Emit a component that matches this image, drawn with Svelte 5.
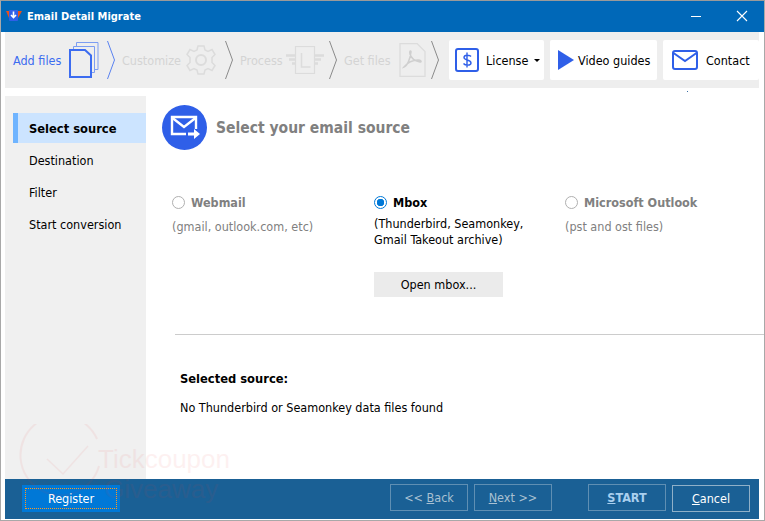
<script>
  // wizard steps along the top bar, width holds the label and the gap up to its icon
  const steps = [
    { label: 'Add files', icon: 'files', active: true, width: 56, after: 8 },
    { label: 'Customize', icon: 'gear', width: 64, after: 9 },
    { label: 'Process', icon: 'process', width: 45, after: 4 },
    { label: 'Get files', icon: 'pdf', width: 55, after: 5 }
  ];
  const menu = ['Select source', 'Destination', 'Filter', 'Start conversion'];
</script>

<div class="window">
  <header class="titlebar">
    <svg class="logo" width="17" height="14" viewBox="0 0 17 14">
      <path d="M0 2h3v7z" fill="#e8501c" />
      <path d="M16 2h-4v7z" fill="#e8501c" />
      <rect x="3" y="1" width="9" height="11" rx="1" fill="#2f5fe8" />
      <path d="M7.500 2.500v6M5 6l2.500 2.500L10 6" stroke="#fff" stroke-width="1.600" fill="none" />
    </svg>
    <span class="title">Email Detail Migrate</span>
    <div class="winbtns">
      <svg width="12" height="12" viewBox="0 0 12 12"><path d="M1 6.500h10" stroke="#fff" /></svg>
      <svg width="12" height="12" viewBox="0 0 12 12"><path d="M1 1l10 10M11 1L1 11" stroke="#fff" stroke-width="1.100" /></svg>
    </div>
  </header>

  <div class="toolbar">
    {#each steps as step}
      <span class="step" class:active={step.active} style="width: {step.width}px">{step.label}</span>
      {#if step.icon === 'files'}
        <svg width="30" height="36" viewBox="0 0 30 36" fill="none" stroke="#3c6cf0">
          <path d="M7.500 4V.500h21.500v27h-4" stroke="#7c9df2" />
          <path d="M4.500 7V4.500h21v26h-3" stroke="#7c9df2" />
          <path d="M1 8h15l6 5.500V35H1z" stroke-width="2" fill="#eee" />
        </svg>
      {:else if step.icon === 'gear'}
        <svg width="30" height="30" viewBox="0 0 30 30" fill="none" stroke="#dcdcdc" stroke-width="1.500">
          <path d="M12 1h6l1 4 3 1.500 4-2 3 5-3 3v5l3 3-3 5-4-2-3 1.500-1 4h-6l-1-4-3-1.500-4 2-3-5 3-3v-5l-3-3 3-5 4 2 3-1.500z" />
          <circle cx="15" cy="15" r="5" stroke-width="2" />
        </svg>
      {:else if step.icon === 'process'}
        <svg width="40" height="28" viewBox="0 0 40 28" fill="none" stroke="#dcdcdc">
          <rect x="10.500" y="0.500" width="19" height="27" stroke-width="1.200" />
          <path d="M16.500 7v14h9" stroke-width="1.600" />
          <path d="M1 9.500h9M4 13.500h6M7 17.500h3M30 9.500h9M30 13.500h6M30 17.500h3" stroke-width="2.400" />
        </svg>
      {:else}
        <svg width="27" height="34" viewBox="0 0 27 34" fill="none" stroke="#dcdcdc" stroke-width="1.300">
          <path d="M1 .500h17l8 8v25H1z" />
          <path d="M5 24c3-1 6-7 7-15 0-2-2-1-1 2 1 4 5 7 10 8 2 0 1-2-2-2-5 0-10 2-14 7z" stroke="#cfcfcf" stroke-width="1.500" />
        </svg>
      {/if}
      <svg class="chevron" style="margin-left: {step.after}px" width="8" height="38" viewBox="0 0 8 38" fill="none" stroke={step.active ? '#5a82f0' : '#8a8a8a'}>
        <path d="M0.500 0l7 19-7 19" />
      </svg>
    {/each}

    <button class="toolbtn license">
      <svg width="24" height="24" viewBox="0 0 24 24" fill="none" stroke="#2f5fe8">
        <rect x="1" y="1" width="22" height="22" rx="2" stroke-width="2" />
        <path d="M16 8.500c-1-1.500-7-2-7 1 0 3 7 2 7 5.500 0 3-6 2.500-7.500 .5M12 4.500v15" stroke-width="1.400" />
      </svg>
      <span class="btnlabel">License</span>
      <i class="caret"></i>
    </button>
    <button class="toolbtn video">
      <svg width="16" height="20" viewBox="0 0 16 20"><path d="M0 0l16 10L0 20z" fill="#2f5fe8" /></svg>
      <span>Video guides</span>
    </button>
    <button class="toolbtn contact">
      <svg width="26" height="20" viewBox="0 0 26 20" fill="none" stroke="#2f5fe8" stroke-width="2">
        <rect x="1" y="1" width="24" height="18" rx="2" />
        <path d="M1.500 3l11.500 8 11.500-8" />
      </svg>
      <span>Contact</span>
    </button>
  </div>

  <div class="middle">
    <nav class="sidebar">
      {#each menu as item, i}
        <div class="navitem" class:selected={i === 0}>{item}</div>
      {/each}
    </nav>

    <main class="content">
      <div class="heading">
        <svg width="45" height="45" viewBox="0 0 45 45">
          <circle cx="22.500" cy="22.500" r="22.500" fill="#2f5fe8" />
          <path d="M24 29H10V12h24v12" fill="none" stroke="#fff" stroke-width="2.400" />
          <path d="M10.500 13l11.500 9 11.500-9" fill="none" stroke="#fff" stroke-width="2.400" />
          <path d="M26 27.500h6V24l6 5-6 5v-3.500h-6z" fill="#fff" />
        </svg>
        <h1>Select your email source</h1>
      </div>

      <div class="sources">
        <div class="source webmail disabled">
          <label><i class="radio"></i>Webmail</label>
          <p>(gmail, outlook.com, etc)</p>
        </div>
        <div class="source mbox">
          <label><i class="radio on"></i>Mbox</label>
          <p>(Thunderbird, Seamonkey,<br />Gmail Takeout archive)</p>
          <button class="open">Open mbox...</button>
        </div>
        <div class="source outlook disabled">
          <label><i class="radio"></i>Microsoft Outlook</label>
          <p>(pst and ost files)</p>
        </div>
      </div>

      <hr />

      <div class="selected-source">
        <h2>Selected source:</h2>
        <p>No Thunderbird or Seamonkey data files found</p>
      </div>
    </main>
  </div>

  <footer class="bottom">
    <button class="register"><span>Register</span></button>
    <button class="fbtn off back">&lt;&lt; <u>B</u>ack</button>
    <button class="fbtn off next"><u>N</u>ext &gt;&gt;</button>
    <button class="fbtn off start"><u>S</u>TART</button>
    <button class="fbtn cancel"><u>C</u>ancel</button>
  </footer>

  <!-- stray pixel under the toolbar -->
  <i class="speck"></i>

  <div class="watermark">
    <svg width="82" height="82" viewBox="0 0 82 82" fill="none" stroke="#e84040">
      <path d="M78 15A40 40 0 1 0 80 42" stroke-width="2" />
      <path d="M28 35l16 15 25-28" stroke-width="1.500" />
    </svg>
    <div class="wm-text">
      <span>Tickcoupon</span>
      <span class="wm-second">Giveaway</span>
    </div>
  </div>
</div>

<style>
  :global(body) {
    margin: 0;
    background: #fff;
  }
  .window {
    position: relative;
    width: 765px;
    height: 521px;
    box-sizing: border-box;
    border-top: 1px solid #9a9a9a;
    border-left: 1px solid #a8a8a8;
    border-right: 1px solid #a8a8a8;
    border-bottom: 1px solid #a8a8a8;
    background: #fff;
    display: flex;
    flex-direction: column;
    font-family: "DejaVu Sans Condensed", "DejaVu Sans", sans-serif;
    font-stretch: condensed;
    font-size: 12.500px;
    color: #000;
    overflow: hidden;
  }
  .titlebar {
    height: 31px;
    flex: none;
    background: #0068b8;
    color: #fff;
    display: flex;
    align-items: center;
    padding-left: 5px;
  }
  .logo {
    margin-right: 4px;
    margin-top: -2px;
  }
  .title {
    font-weight: 700;
    font-size: 11px;
  }
  .winbtns {
    margin-left: auto;
    display: flex;
    gap: 34px;
    margin-right: 16px;
    margin-top: -2px;
  }
  .toolbar {
    height: 56px;
    flex: none;
    margin-left: 4px;
    margin-right: 5px;
    background: #eee;
    display: flex;
    align-items: center;
    padding-left: 8px;
  }
  .step {
    color: #d4d4d4;
    margin-left: 7px;
    margin-top: 1px;
    white-space: nowrap;
    flex: none;
  }
  .step:first-child {
    margin-left: 0;
  }
  .step.active {
    color: #3c6cf0;
  }
  .toolbar svg {
    flex: none;
  }
  .toolbtn {
    height: 40px;
    border: 0;
    border-radius: 2px;
    background: #fff;
    font: inherit;
    display: flex;
    align-items: center;
    padding: 0;
    flex: none;
  }
  .toolbtn span {
    margin-top: 1px;
  }
  .license {
    width: 95px;
    margin-left: 10px;
    padding-left: 6px;
  }
  .btnlabel {
    margin-left: 7px;
  }
  .caret {
    margin-left: 6px;
    border-left: 3px solid transparent;
    border-right: 3px solid transparent;
    border-top: 3px solid #000;
  }
  .video {
    width: 107px;
    margin-left: 6px;
    padding-left: 8px;
    gap: 4px;
  }
  .contact {
    width: 96px;
    margin-left: 6px;
    padding-left: 9px;
    gap: 8px;
  }
  .middle {
    flex: 1;
    display: flex;
    margin-top: 8px;
    margin-left: 4px;
    min-height: 0;
  }
  .sidebar {
    width: 141px;
    flex: none;
    background: #f0f0f0;
    padding-top: 17px;
    box-sizing: border-box;
  }
  .navitem {
    height: 32px;
    line-height: 32px;
    padding-left: 16px;
    margin-left: 8px;
  }
  .navitem.selected {
    height: 30px;
    line-height: 31px;
    margin-bottom: 2px;
    padding-left: 11px;
    background: #cce4ff;
    border-left: 5px solid #6fb4ff;
    font-weight: 700;
    font-size: 12.800px;
  }
  .content {
    flex: 1;
    padding: 9px 0 0 16px;
    min-width: 0;
  }
  .heading {
    display: flex;
    align-items: center;
    gap: 9px;
  }
  h1 {
    margin: 1px 0 0;
    font-size: 15.500px;
    font-weight: 700;
    color: #808080;
  }
  .sources {
    display: flex;
    margin-top: 44px;
    padding-left: 10px;
    height: 140px;
  }
  .source label {
    display: flex;
    align-items: center;
    gap: 6px;
    font-weight: 700;
    height: 16px;
    font-size: 12.500px;
  }
  .source p {
    margin: 9px 0 0;
    line-height: 16px;
  }
  .source.mbox p {
    margin-top: 6px;
  }
  .disabled {
    color: #808080;
  }
  .webmail {
    width: 202px;
  }
  .mbox {
    width: 191px;
  }
  .radio {
    width: 13px;
    height: 13px;
    box-sizing: border-box;
    border: 1px solid #b0b0b0;
    border-radius: 50%;
    background: #fff;
    flex: none;
  }
  .radio.on {
    border-color: #0078d7;
    background: radial-gradient(circle, #0078d7 0 3.500px, #fff 4px);
  }
  .open {
    display: block;
    width: 129px;
    height: 25px;
    margin-top: 24px;
    border: 0;
    background: #ebebeb;
    font: inherit;
    padding: 0;
  }
  hr {
    margin: 0 0 0 13px;
    border: 0;
    border-top: 1px solid #ccc;
  }
  .selected-source {
    padding-left: 18px;
    margin-top: 36px;
  }
  h2 {
    margin: 0;
    font-size: 12.800px;
    font-weight: 700;
    line-height: 16px;
  }
  .selected-source p {
    margin: 13px 0 0;
    line-height: 16px;
  }
  .bottom {
    height: 40px;
    flex: none;
    margin: 0 5px 1px 4px;
    background: #1a6095;
    display: flex;
    align-items: flex-start;
    padding-top: 5px;
    box-sizing: border-box;
  }
  .bottom button {
    font: inherit;
    padding: 0;
    flex: none;
  }
  .register {
    width: 98px;
    height: 27px;
    margin-left: 17px;
    margin-top: 1px;
    border: 0;
    background: #0078d7;
    color: #fff;
    padding: 3px !important;
    box-sizing: border-box;
  }
  .register span {
    display: flex;
    align-items: center;
    justify-content: center;
    height: 100%;
    box-sizing: border-box;
    border: 1px dotted #ff9a20;
  }
  .fbtn {
    width: 78px;
    height: 27px;
    box-sizing: border-box;
    background: transparent;
    border: 1px solid #8fb0c8;
    color: #fff;
  }
  .fbtn.off {
    color: #a9c0d2;
    border-color: #5f8fb3;
  }
  .back {
    margin-left: 270px;
  }
  .next {
    margin-left: 6px;
  }
  .start {
    margin-left: 36px;
    font-weight: 700 !important;
    color: #a9cfee !important;
  }
  .cancel {
    margin-left: 6px;
    margin-top: 1px;
  }
  .speck {
    position: absolute;
    left: 686px;
    top: 90px;
    width: 1px;
    height: 1px;
    background: #3a6ea5;
  }
  .watermark {
    position: absolute;
    left: 18px;
    top: 423px;
    display: flex;
    opacity: 0.07;
    pointer-events: none;
  }
  .wm-text {
    display: flex;
    flex-direction: column;
    margin-left: -3px;
    margin-top: 20px;
    font-family: "Liberation Sans", sans-serif;
    font-size: 26px;
    line-height: 30px;
    color: #e84040;
  }
  .wm-second {
    margin-left: 6px;
  }
</style>
